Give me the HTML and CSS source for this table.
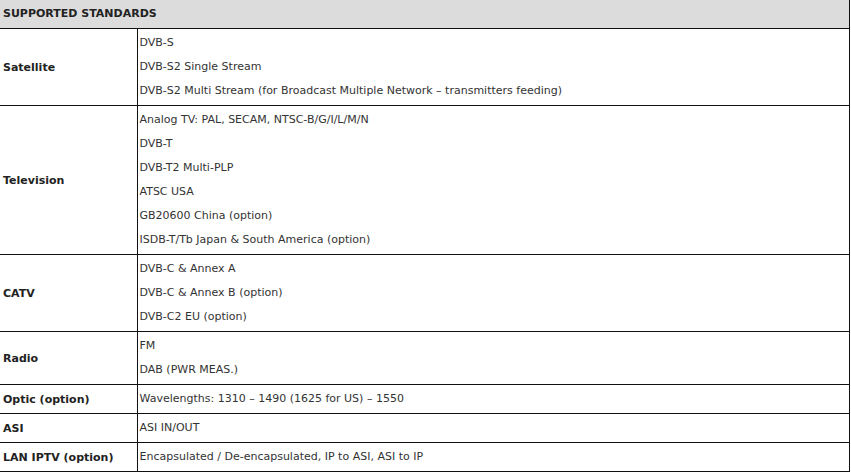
FILE: index.html
```html
<!DOCTYPE html>
<html>
<head>
<meta charset="utf-8">
<link rel="stylesheet" href="styles.css">
</head>
<body>
<table class="spec">
  <colgroup>
    <col class="col-label">
    <col class="col-vals">
  </colgroup>
  <thead>
    <tr><th colspan="2" class="head">SUPPORTED STANDARDS</th></tr>
  </thead>
  <tbody>
    <tr>
      <td class="label">Satellite</td>
      <td class="vals"><p>DVB-S</p><p>DVB-S2 Single Stream</p><p>DVB-S2 Multi Stream (for Broadcast Multiple Network – transmitters feeding)</p></td>
    </tr>
    <tr>
      <td class="label">Television</td>
      <td class="vals"><p>Analog TV: PAL, SECAM, NTSC-B/G/I/L/M/N</p><p>DVB-T</p><p>DVB-T2 Multi-PLP</p><p>ATSC USA</p><p>GB20600 China (option)</p><p>ISDB-T/Tb Japan &amp; South America (option)</p></td>
    </tr>
    <tr>
      <td class="label">CATV</td>
      <td class="vals"><p>DVB-C &amp; Annex A</p><p>DVB-C &amp; Annex B (option)</p><p>DVB-C2 EU (option)</p></td>
    </tr>
    <tr>
      <td class="label">Radio</td>
      <td class="vals"><p>FM</p><p>DAB (PWR MEAS.)</p></td>
    </tr>
    <tr>
      <td class="label">Optic (option)</td>
      <td class="vals"><p>Wavelengths: 1310 – 1490 (1625 for US) – 1550</p></td>
    </tr>
    <tr>
      <td class="label">ASI</td>
      <td class="vals"><p>ASI IN/OUT</p></td>
    </tr>
    <tr>
      <td class="label">LAN IPTV (option)</td>
      <td class="vals"><p>Encapsulated / De-encapsulated, IP to ASI, ASI to IP</p></td>
    </tr>
  </tbody>
</table>
</body>
</html>
```

FILE: styles.css
```css
html, body {
  margin: 0;
  padding: 0;
  background: #fff;
}
.spec {
  border-collapse: collapse;
  width: 850px;
  font-family: "DejaVu Sans", Verdana, sans-serif;
  font-size: 11px;
  color: #333;
  table-layout: fixed;
}
.col-label {
  width: 137px;
}
.spec th, .spec td {
  border: 1px solid #111;
  border-left: none;
}
.spec td.vals {
  border-left: 1px solid #111;
}
.spec .head {
  background: #dcdcdc;
  text-align: left;
  font-weight: bold;
  color: #222;
  height: 28px;
  padding: 0 3px;
  border-top: none;
  line-height: 14px;
}
.spec .label {
  padding: 0 0 0 3px;
  font-weight: bold;
  color: #222;
  vertical-align: middle;
}
.spec .vals {
  padding: 7px 2px 7px 2px;
  vertical-align: middle;
}
.spec .vals p {
  margin: 0;
  line-height: 14px;
}
.spec .vals p + p {
  margin-top: 10px;
}
```
